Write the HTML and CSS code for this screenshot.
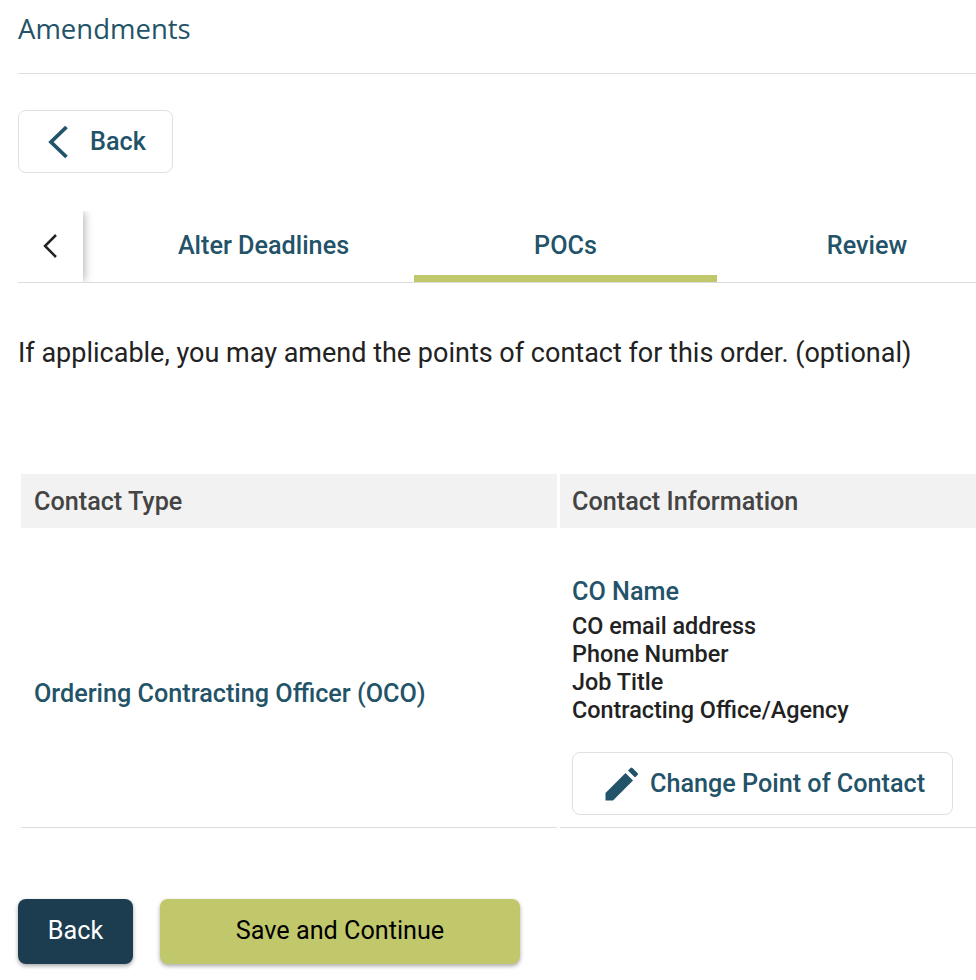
FILE: index.html
```html
<!DOCTYPE html>
<html lang="en">
<head>
<meta charset="utf-8">
<title>Amendments</title>
<link rel="stylesheet" href="styles.css">
</head>
<body>
<header class="page-head"><h1>Amendments</h1></header>
<div class="back-row">
  <button class="btn-outline back-top">
    <svg class="chev" width="20" height="34" viewBox="0 0 20 34"><path d="M18.500 2 3 17l15.500 15" fill="none" stroke="#235368" stroke-width="3.800"/></svg>
    <span>Back</span>
  </button>
</div>
<nav class="tabs">
  <div class="tab-arrow"><svg width="16" height="26" viewBox="0 0 16 26"><path d="M14 2 3 13l11 11" fill="none" stroke="#222" stroke-width="2.500"/></svg></div>
  <div class="tab-list">
    <div class="tab first">Alter Deadlines</div>
    <div class="tab active">POCs</div>
    <div class="tab last">Review</div>
  </div>
</nav>
<p class="intro">If applicable, you may amend the points of contact for this order. (optional)</p>
<table class="poc">
  <thead><tr><th class="c1">Contact Type</th><th class="c2">Contact Information</th></tr></thead>
  <tbody>
    <tr>
      <td class="type">Ordering Contracting Officer (OCO)</td>
      <td class="info">
        <div class="name">CO Name</div>
        <div class="details">CO email address<br>Phone Number<br>Job Title<br>Contracting Office/Agency</div>
        <button class="btn-outline change">
          <svg width="34" height="34" viewBox="0 0 34 34"><path fill="#235368" d="M0.500 33.500V26L20.500 6l7.500 7.500-20 20zM23 3.500l2.500-2.500a1.400 1.400 0 0 1 2 0l5 5a1.400 1.400 0 0 1 0 2L30 10.500z"/></svg>
          <span>Change Point of Contact</span>
        </button>
      </td>
    </tr>
  </tbody>
</table>
<div class="actions">
  <button class="btn-back">Back</button>
  <button class="btn-save">Save and Continue</button>
</div>
</body>
</html>
```
FILE: styles.css
```css
* { box-sizing: border-box; }
html, body { margin: 0; padding: 0; }
body { width: 976px; height: 980px; overflow: hidden; background: #fff; font-family: Roboto, "Liberation Sans", sans-serif; color: #222; padding-left: 18px; }
button { font-family: inherit; cursor: pointer; }
.page-head { height: 74px; border-bottom: 1px solid #e0e0e0; }
.page-head h1 { margin: 0; padding-top: 12px; font-family: "Open Sans", sans-serif; font-size: 27.5px; line-height: 34px; font-weight: 400; color: #235368; }
.back-row { padding-top: 36px; height: 137px; }
.btn-outline { display: flex; align-items: center; background: #fff; border: 1px solid #e0e0e0; border-radius: 8px; color: #235368; font-weight: 500; }
.back-top { width: 155px; height: 63px; padding: 0 0 0 29px; gap: 22px; font-size: 25.2px; }
.tabs { display: flex; height: 72px; border-bottom: 1px solid #dcdcdc; }
.tab-arrow { flex: none; width: 65px; height: 71px; display: flex; align-items: center; padding: 0 0 2px 24px; box-shadow: 3px 0 8px -1px rgba(0,0,0,.28); clip-path: inset(0 -12px 0 0); }
.tab-list { flex: none; display: grid; grid-template-columns: 303px 303px 303px; margin-left: 28px; height: 71px; }
.tab { display: flex; align-items: center; justify-content: center; padding-bottom: 2px; font-size: 25.2px; font-weight: 500; color: #235368; height: 71px; }
.tab.first { padding-left: 2px; }
.tab.last { padding-right: 3px; }
.tab.active { box-shadow: inset 0 -7px 0 #c1c86b; }
.intro { margin: 52px 0 0; font-size: 27px; line-height: 36px; color: #222; }
.poc { border-collapse: separate; border-spacing: 3px 0; margin: 103px 0 0 0; width: 961px; table-layout: fixed; }
.poc th { background: #f2f2f2; height: 54px; text-align: left; font-size: 25.2px; font-weight: 500; color: #444; padding: 0 13px; }
.poc th.c2 { padding-left: 12px; }
.poc .c1 { width: 536px; }
.poc td { border-bottom: 1px solid #dcdcdc; padding: 0 12px; }
.poc td.type { font-size: 25.2px; font-weight: 500; color: #235368; vertical-align: middle; padding: 32px 13px 0; }
.poc td.info { height: 300px; vertical-align: top; padding-top: 47px; }
.name { font-size: 25.2px; font-weight: 500; color: #235368; line-height: 34px; }
.details { font-size: 23.4px; font-weight: 500; line-height: 28px; color: #222; margin-top: 3px; }
.change { width: 381px; height: 63px; padding: 0 0 0 32px; gap: 11px; font-size: 25.2px; margin-top: 28px; }
.actions { display: flex; gap: 27px; margin-top: 71px; }
.btn-back, .btn-save { height: 65px; border: 0; border-radius: 8px; font-size: 25.2px; padding: 0 0 2px; box-shadow: 0 2px 4px rgba(0,0,0,.35); }
.btn-back { width: 115px; background: #1b3d4f; color: #fff; }
.btn-save { width: 360px; background: #c1c86b; color: #000; }
```
